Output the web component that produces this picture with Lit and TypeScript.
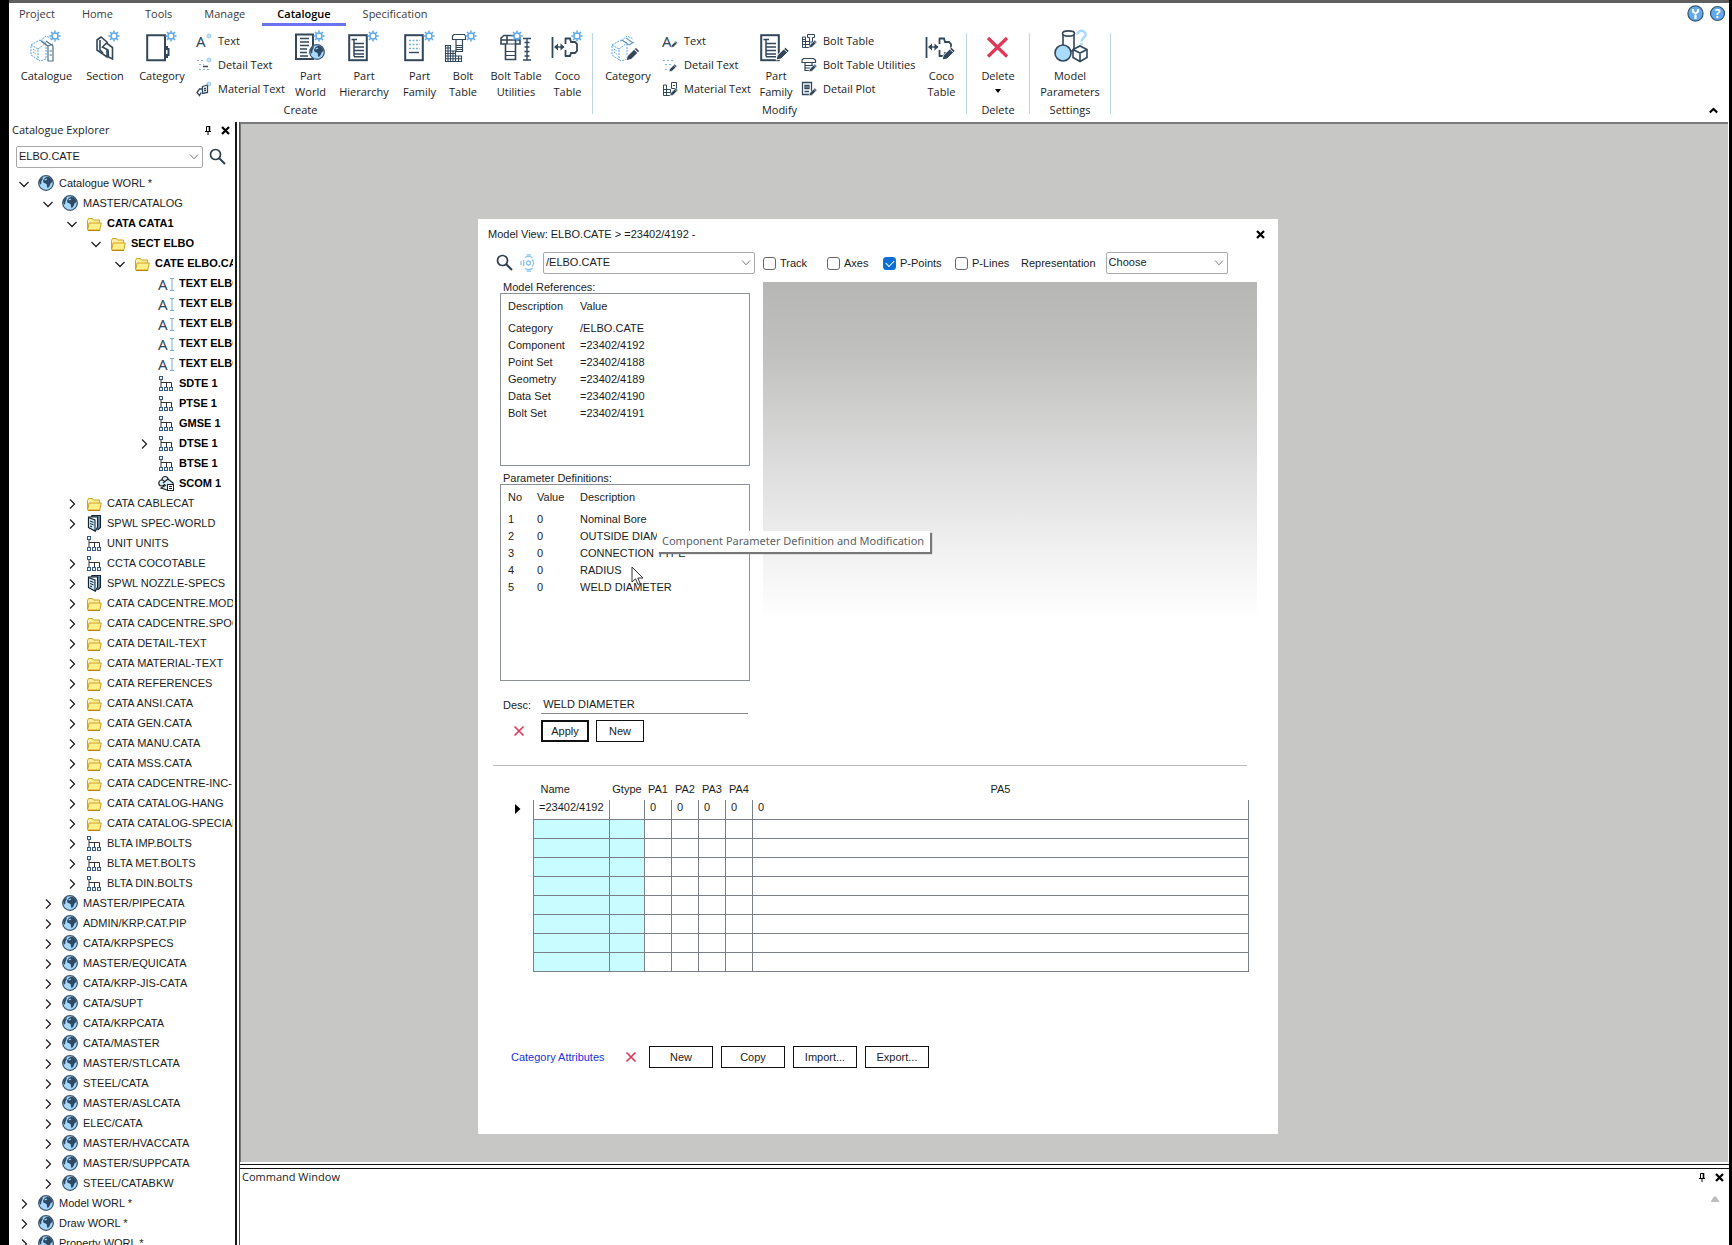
import { LitElement, html, css, svg, nothing } from "lit";
import { customElement, state } from "lit/decorators.js";

const ui = css`
  :host { font: 11px/16px "Open Sans", "Noto Sans", sans-serif; color: #1c1c1c; }
  * { box-sizing: border-box; }
  button { font: inherit; color: inherit; background: none; border: 0; padding: 0; margin: 0; cursor: default; }
  svg { display: block; flex: none; }
  .plain { font-family: "Liberation Sans", Arial, sans-serif; }
  .combo { display: grid; align-items: center; }
  .combo > * { grid-area: 1 / 1; }
  .combo select {
    appearance: none; width: 100%; height: 22px; margin: 0; padding: 0 20px 2px 2px;
    border: 1px solid #a9a9a9; border-radius: 2px; background: #fff; color: #1c1c1c;
    font: 11px/16px "Liberation Sans", Arial, sans-serif;
  }
  .combo svg { justify-self: end; margin-right: 4px; pointer-events: none; }
`;

const D = "#33475b";
const B = "#5aa7e4";

/* ---- shared drawing parts ---- */
const star = (x: number, y: number, s = 1) => svg`
  <g transform="translate(${x} ${y}) scale(${s})" fill="none" stroke=${B}>
    <circle r="3" stroke-width="1.4" fill="#fff"></circle>
    <path stroke-width="1.5" d="M0-5.6V-3.4M0 3.4V5.6M-5.6 0H-3.4M3.4 0H5.6M-4-4L-2.5-2.5M2.5 2.5L4 4M4-4L2.5-2.5M-2.5 2.5L-4 4"></path>
  </g>`;
const pencil = (x: number, y: number, s = 1) => svg`
  <g transform="translate(${x} ${y}) scale(${s})">
    <path d="M0 13L1.2 8.4L9.5 .2L13.2 3.9L5 12Z" fill=${D} stroke="#fff" stroke-width="1"></path>
    <path d="M8 2.2L11.4 5.6" stroke="#fff" stroke-width="1"></path>
  </g>`;
const globe = (x: number, y: number, r: number) => svg`
  <g transform="translate(${x} ${y}) scale(${r / 8})">
    <circle r="7.3" fill="#a5d8fb" stroke="#3d556e" stroke-width="1.3"></circle>
    <path fill="#2f4a66" d="M-2.4-3.6L-1-5.2L1.4-6.2L4-5.4L5.8-3.4L6.2-1L4.4.8L3.6 3L2.2 4.8L1 4.4L.8 1.6L-.4.4L-2.4-.2L-3-2Z"></path>
    <path fill="#2f4a66" d="M-6.8-1.4L-5.4-4.2L-3-6L-3.6-3.6L-4.6-1.4L-4.8 1L-6 1.6Z"></path>
    <path fill="#a5d8fb" d="M-1.6-3.4L.6-4.4L1.2-3.6L-.8-2.6Z"></path>
  </g>`;
const book = svg`
  <g fill="none" stroke=${B} stroke-width="1" stroke-dasharray="2 1">
    <path d="M3 16L12 11L18 14V30L12 32L3 26Z M3 16L10 20V31 M10 20L18 14 M5 20L8 22M5 23L8 25M12 12L18 7L24 10"></path>
  </g>`;
const connector = svg`
  <g fill="none" stroke=${D} stroke-width="1.8">
    <path d="M3.5 8V29M16 9.500H21L22 13H26L28 15V22L26 24H22L21 27H16M16.500 9V15M16.500 21V27.500"></path>
    <path d="M6 18H15" stroke-width="1.400"></path>
  </g>
  <path fill=${D} d="M5 18L9 14.500V21.500ZM15.500 18L11.500 14.500V21.500Z"></path>`;
const sheet = svg`<rect x="4.200" y="6.200" width="17.600" height="25" fill="#fff" stroke=${D} stroke-width="2"></rect>`;
const treeLines = svg`<path fill="none" stroke=${D} stroke-width="1.500" d="M6.500 10.500H12M9 10.500V27.500M9 14.500H19M9 18H19M9 21.500H19M9 25H19M9 27.800H19"></path>`;
const boltShape = svg`
  <path fill="#fff" stroke=${D} stroke-width="1.600" d="M4 9L7 6.500H20L23 9V15H18.500V30.500H8.500V15H4Z M4 11H23M10 7V15M18.500 7V15"></path>
  <path fill="none" stroke=${D} stroke-width="1.200" d="M8.500 15H18.500M8.500 22.500H18.500M8.500 26.500H18.500"></path>`;
const stairs = svg`
  <path fill="#fff" stroke=${D} stroke-width="1.100" d="M1.500 16.500H6.500V22H11.500V27H17.500V32.500H1.500Z M1.500 19H6.500M1.500 22H6.500M1.500 24.500H11.500M1.500 27H11.500M1.500 29.800H17.500M4 16.500V32.500M6.500 22V32.500M9 22V32.500M11.500 27V32.500M14.500 27V32.500"></path>
  <path fill="#fff" stroke=${D} stroke-width="1.200" d="M8.500 7L10 5.500H20.500L21.500 7V10.500H18.500V22.500H12V10.500H8.500Z M12 10.500H18.500M12 16.500H18.500M12 18.500H18.500M12 20.500H18.500"></path>`;

const big: Record<string, unknown> = {
  catalogue: svg`${book}<g fill="none" stroke="#52708a" stroke-width="1.200"><path d="M13 12L20 17V32H25V17L18 12M20 17L25 15M21.500 22H24M21.500 26H24"></path></g>${star(27, 7)}`,
  section: svg`<g fill="#fff" stroke=${D} stroke-width="1.600"><path d="M11 11L15 8L21 13V28L11 21Z"></path><path d="M14 11L14 21L17 24M16.500 18L20.500 14L26.500 18.500V30L22.500 28L22 21Z"></path></g>${star(28, 7)}`,
  category: svg`<path fill="none" stroke=${D} stroke-width="2" d="M4.200 6.200H22V18H24V20H25.500V26H24V28H22V31.200H4.200Z M22 18V28"></path>${star(28, 7)}`,
  world: svg`<rect x="4" y="5.500" width="17" height="24.500" fill="#fff" stroke=${D} stroke-width="2"></rect><path stroke=${D} stroke-width="1.700" d="M8 9.500H17M8 13H17M8 16.500H17M8 20H15M8 23.500H15M8 27H16"></path>${globe(25, 23, 8)}${star(27, 7)}`,
  hierarchy: svg`${sheet}${treeLines}${star(28, 7)}`,
  family: svg`${sheet}<path stroke="#7db4de" stroke-width="1.300" stroke-dasharray="2 1.500" d="M8 11.500H19M8 15.500H19M8 19.500H19"></path><path stroke=${D} stroke-width="1.400" d="M8 23.500H18"></path>${star(28, 7)}`,
  bolt: svg`${stairs}${star(27, 7)}`,
  boltutil: svg`${boltShape}<path fill="none" stroke=${D} stroke-width="1.400" d="M26 9.500H34M26 31H34M30 9.500V31M27.500 13.500H32.500M27.500 18H32.500M27.500 22.500H32.500M27.500 27H32.500"></path>${star(20, 7)}`,
  coco: svg`${connector}${star(28, 7)}`,
  categoryEdit: svg`${book}<g fill="none" stroke="#6d9bc0" stroke-width="1.200"><path d="M13 11L20 16M17 9L24 14M20 16L25 13"></path></g>${pencil(17, 18, 1.05)}`,
  familyEdit: svg`${sheet}${treeLines}${pencil(19, 18, 1)}`,
  cocoEdit: svg`${connector}${pencil(19, 18, 1)}`,
  remove: svg`<path stroke="#e23657" stroke-width="3.200" d="M9 9L28 27.500M28 9L9 27.500"></path>`,
  model: svg`<g stroke=${D} stroke-width="1.600" fill="#fff"><path d="M12 4.500V22H23V4.500"></path><ellipse cx="17.500" cy="4.500" rx="6" ry="2.600"></ellipse><path d="M22 20.500L29 17L36 20.500V28.500L29 32.500L22 28.500ZM22 20.500L29 24L36 20.500M29 24V32.500"></path><circle cx="12" cy="24" r="8" fill="#a9dcfc"></circle></g><path fill="none" stroke="#a9dcfc" stroke-width="2.600" d="M26.500 5.500C27 0 35 1 34.500 6C34 9 30.500 9 30.500 12.500M30.500 14V16"></path>`,
};

const small: Record<string, unknown> = {
  text: svg`<text x="0" y="14" font-family="Noto Sans" font-size="15" fill=${D}>A</text>${star(13, 3, 0.45)}`,
  detail: svg`<path fill="none" stroke="#7db4de" stroke-dasharray="2 2" d="M1 3.500H9M3 7.500H8M3 12.500H14"></path><path stroke=${D} stroke-width="1.500" d="M7 9.500H12"></path>${star(13, 3, 0.45)}`,
  material: svg`<path fill="#fff" stroke=${D} stroke-width="1.300" d="M6.500 5.500L11.500 4V11.500L6.500 12.500ZM6.500 8H3.500L1 11.500L3.500 14.500L5 11.500M8 7.500H10M8 9.500H10"></path>${star(13, 3, 0.45)}`,
  textEdit: svg`<text x="0" y="14" font-family="Noto Sans" font-size="15" fill=${D}>A</text>${pencil(9, 8, 0.5)}`,
  detailEdit: svg`<path fill="none" stroke="#7db4de" stroke-dasharray="2 2" d="M1 3.500H13M3 7.500H9M3 12.500H8"></path>${pencil(7, 7, 0.6)}`,
  materialEdit: svg`<path fill="none" stroke=${D} d="M1.500 4V14.500H8.500V8.500H4.500V4ZM1.500 8.500H8M1.500 11.500H8M4.500 8V14.500M9.500 1.500H14.500V7.500H9.500ZM11 4.500H13"></path>${pencil(8, 7, 0.6)}`,
  boltEdit: svg`<path fill="none" stroke=${D} d="M1.500 4V14.500H8.500V8.500H4.500V4ZM1.500 6.500H4M1.500 8.500H8M1.500 11.500H8M4.500 8V14.500M6.500 1.500H13.500V4.500H11.500V9H8.500V4.500H6.500Z"></path>${pencil(8, 7, 0.6)}`,
  boltutilEdit: svg`<path fill="none" stroke=${D} stroke-width="1.200" d="M1 3L2.500 1.500H12.500L14.500 3V5.500H1ZM4 5.500V13.500H9M4 8.500H12M4 11H9M11 5.500V8"></path>${pencil(8, 7, 0.6)}`,
  plot: svg`<path fill="none" stroke=${D} stroke-width="1.300" d="M1.500 1.500H10.500V13.500H1.500ZM4 4.500H8V7.500H4ZM6 4V8M3.500 10.500H8"></path>${pencil(8, 7, 0.6)}`,
};

const pin = html`<svg width="8" height="10" viewBox="0 0 8 10" fill="none" stroke="#000"><path d="M2.500 6V1.500H5.500V6M1 6.500H7M4 7V10"></path><path d="M5.500 1V6.500" stroke-width="1.600"></path></svg>`;
const cross = html`<svg width="9" height="9" viewBox="0 0 9 9"><path d="M1 1L8 8M8 1L1 8" stroke="#000" stroke-width="2.200"></path></svg>`;
const redCross = html`<svg width="12" height="12" viewBox="0 0 12 12"><path d="M1.500 1.500L10.500 10.500M10.500 1.500L1.500 10.500" stroke="#e0395a" stroke-width="1.700"></path></svg>`;
const lens = html`<svg width="18" height="18" viewBox="0 0 18 18" fill="none" stroke="#2f3e4c"><circle cx="6.500" cy="6.500" r="5" stroke-width="1.700"></circle><path d="M10 10L16 16" stroke-width="2"></path></svg>`;
const chevron = html`<svg width="10" height="6" viewBox="0 0 10 6" fill="none" stroke="#777"><path d="M1 .5L5 4.800L9 .5"></path></svg>`;

type Large = { kind: "large"; icon: string; label: string[]; menu?: boolean };
type Stack = { kind: "stack"; rows: [string, string][] };
type Group = { name: string; cls: string; items: (Large | Stack)[] };
const L = (icon: string, ...label: string[]): Large => ({ kind: "large", icon, label });
const groups: Group[] = [
  { name: "Create", cls: "create", items: [
    L("catalogue", "Catalogue"), L("section", "Section"), L("category", "Category"),
    { kind: "stack", rows: [["text", "Text"], ["detail", "Detail Text"], ["material", "Material Text"]] },
    L("world", "Part", "World"), L("hierarchy", "Part", "Hierarchy"), L("family", "Part", "Family"),
    L("bolt", "Bolt", "Table"), L("boltutil", "Bolt Table", "Utilities"), L("coco", "Coco", "Table") ] },
  { name: "Modify", cls: "modify", items: [
    L("categoryEdit", "Category"),
    { kind: "stack", rows: [["textEdit", "Text"], ["detailEdit", "Detail Text"], ["materialEdit", "Material Text"]] },
    L("familyEdit", "Part", "Family"),
    { kind: "stack", rows: [["boltEdit", "Bolt Table"], ["boltutilEdit", "Bolt Table Utilities"], ["plot", "Detail Plot"]] },
    L("cocoEdit", "Coco", "Table") ] },
  { name: "Delete", cls: "delete", items: [{ ...L("remove", "Delete"), menu: true }] },
  { name: "Settings", cls: "settings", items: [L("model", "Model", "Parameters")] },
];

@customElement("ribbon-bar")
class RibbonBar extends LitElement {
  @state() private active = "Catalogue";
  static styles = [ui, css`
    :host { display: block; background: #fff; }
    .top { display: flex; height: 24px; padding-right: 3px; }
    .tabs { display: flex; gap: 2px; flex: 1; }
    .tab { padding: 2px 15px 0; border-bottom: 3px solid transparent; height: 23px; color: #3a3a3a; }
    .tab:first-child { padding: 2px 10px 0; }
    .tab.on { border-color: #6a74f3; color: #000; font-weight: 600; }
    .help { display: flex; align-items: start; gap: 5px; padding-top: 2px; }
    .groups { display: flex; align-items: start; padding-left: 5px; }
    .group { padding: 2px 5px 0 4px; position: relative; }
    .group:first-child { padding-left: 0; padding-right: 6px; }
    .group::after { content: ""; position: absolute; right: 0; top: 6px; bottom: 8px; width: 1px; background: #bcd7e8; }
    .items { display: grid; height: 73px; }
    .create { grid-template-columns: 65px 52px 62px 97px 41px 66px 45px 42px 64px 39px; }
    .modify { grid-template-columns: 62px 95px 44px 123px 41px; }
    .delete { grid-template-columns: 54px; }
    .settings { grid-template-columns: 72px; }
    .large { display: flex; flex-direction: column; align-items: center; white-space: nowrap; text-align: center; }
    .large svg { margin-bottom: 5px; }
    .large .arrow { margin: 5px 0 0; }
    .stack { display: flex; flex-direction: column; padding-left: 3px; }
    .row { display: flex; align-items: center; gap: 6px; height: 24px; white-space: nowrap; }
    .name { text-align: center; height: 20px; }
    .fold { margin-left: auto; align-self: end; padding: 0 11px 8px; }
  `];
  private item(i: Large | Stack) {
    if (i.kind === "stack")
      return html`<div class="stack">${i.rows.map(([ic, t]) => html`<button class="row"><svg width="16" height="16" viewBox="0 0 16 16">${small[ic]}</svg>${t}</button>`)}</div>`;
    return html`<button class="large"><svg width="38" height="34" viewBox="0 0 38 34">${big[i.icon]}</svg>
      ${i.label.map((t) => html`<span>${t}</span>`)}
      ${i.menu ? html`<svg class="arrow" width="6" height="4" viewBox="0 0 6 4"><path d="M0 0H6L3 4Z"></path></svg>` : nothing}</button>`;
  }
  render() {
    return html`
      <div class="top">
        <nav class="tabs">${["Project", "Home", "Tools", "Manage", "Catalogue", "Specification"].map((t) => html`
          <button class="tab ${t === this.active ? "on" : ""}" @click=${() => (this.active = t)}>${t}</button>`)}</nav>
        <div class="help">
          <button aria-label="Tools"><svg width="17" height="17" viewBox="0 0 17 17"><circle cx="8.500" cy="8.500" r="7.600" fill="#62aaec" stroke="#34536f" stroke-width="1.200"></circle><path d="M6 4V6.500L8.500 8.500L11 6.500V4M8.500 8V14" fill="none" stroke="#fff" stroke-width="2.200"></path></svg></button>
          <button aria-label="Help"><svg width="17" height="17" viewBox="0 0 17 17"><circle cx="8.500" cy="8.500" r="7" fill="#62aaec" stroke="#34536f" stroke-width="1.200"></circle><text x="8.500" y="13" text-anchor="middle" font-family="Open Sans" font-size="12" font-weight="700" fill="#fff">?</text></svg></button>
        </div>
      </div>
      <div class="groups">
        ${groups.map((g) => html`<section class="group"><div class="items ${g.cls}">${g.items.map((i) => this.item(i))}</div><div class="name">${g.name}</div></section>`)}
        <button class="fold" aria-label="Collapse ribbon"><svg width="9" height="7" viewBox="0 0 9 7"><path d="M.8 5.500L4.500 2L8.200 5.500" fill="none" stroke="#000" stroke-width="2.200"></path></svg></button>
      </div>`;
  }
}

/* ---- explorer tree ---- */
type Node = [level: number, icon: string, label: string, state?: string];
const nodes: Node[] = [
  [0, "globe", "Catalogue WORL *", "open"], [1, "globe", "MASTER/CATALOG", "open"],
  [2, "folder", "CATA CATA1", "open"], [3, "folder", "SECT ELBO", "open"], [4, "folder", "CATE ELBO.CATE", "open"],
  ...[1, 2, 3, 4, 5].map((): Node => [5, "text", "TEXT ELBO.CATE"]),
  [5, "set", "SDTE 1"], [5, "set", "PTSE 1"], [5, "set", "GMSE 1"], [5, "set", "DTSE 1", "shut"], [5, "set", "BTSE 1"], [5, "scom", "SCOM 1"],
  [2, "folder", "CATA CABLECAT", "shut"], [2, "spec", "SPWL SPEC-WORLD", "shut"], [2, "set", "UNIT UNITS"],
  [2, "set", "CCTA COCOTABLE", "shut"], [2, "spec", "SPWL NOZZLE-SPECS", "shut"],
  ...["CADCENTRE.MODEL", "CADCENTRE.SPOOL", "DETAIL-TEXT", "MATERIAL-TEXT", "REFERENCES", "ANSI.CATA", "GEN.CATA", "MANU.CATA", "MSS.CATA", "CADCENTRE-INC-", "CATALOG-HANG", "CATALOG-SPECIAL"].map((n): Node => [2, "folder", "CATA " + n, "shut"]),
  ...["IMP", "MET", "DIN"].map((n): Node => [2, "set", `BLTA ${n}.BOLTS`, "shut"]),
  ...["MASTER/PIPECATA", "ADMIN/KRP.CAT.PIP", "CATA/KRPSPECS", "MASTER/EQUICATA", "CATA/KRP-JIS-CATA", "CATA/SUPT", "CATA/KRPCATA", "CATA/MASTER", "MASTER/STLCATA", "STEEL/CATA", "MASTER/ASLCATA", "ELEC/CATA", "MASTER/HVACCATA", "MASTER/SUPPCATA", "STEEL/CATABKW"].map((n): Node => [1, "globe", n, "shut"]),
  ...["Model", "Draw", "Property"].map((n): Node => [0, "globe", n + " WORL *", "shut"]),
];
const treeIcon: Record<string, unknown> = {
  globe: globe(8, 9, 8),
  folder: svg`<path d="M1.500 15.500V6.500L2.500 4.500H6.500L7.500 6H13.500V9" fill="#fdeea0" stroke="#d4a21c"></path><path d="M1.500 16L3.200 9H15.300L13.800 16Z" fill="#fff08c" stroke="#d4a21c"></path><path d="M2 16.500H14" stroke="#b98512"></path>`,
  text: svg`<text x="0" y="16" font-family="Noto Sans" font-size="15" fill=${D}>A</text><path d="M12 4.500H16M12 16.500H16M14 4.500V16.500" fill="none" stroke="#6db0e6"></path>`,
  set: svg`<g fill="#e8f3fb" stroke="#3a5a80"><path d="M3 4V14M3 8.500H13.500M8.500 8.500V13M13.500 8.500V13" fill="none" stroke="#333"></path><rect x="1.500" y="2.500" width="3" height="3"></rect><rect x="1.500" y="13.500" width="3" height="3"></rect><rect x="6.500" y="13.500" width="3" height="3"></rect><rect x="11.500" y="13.500" width="3" height="3"></rect></g>`,
  scom: svg`<g fill="#d7ebf5" stroke="#222" stroke-width="1.200"><circle cx="7" cy="5.500" r="3"></circle><circle cx="3.800" cy="9" r="3"></circle><path d="M5 9L10 5L15 9V16H9L3 14L8 11"></path></g><rect x="9.500" y="10.500" width="6" height="6" fill="#fff" stroke="#222"></rect><path d="M11 12.500H14M11 14.500H14" stroke="#222"></path>`,
  spec: svg`<path d="M5 3L6 1.500H14.500V13.500L11.500 16" fill="#5e87ab" stroke="#16242f" stroke-width="1.100"></path><path d="M2.500 3H11.500V13L9.500 17L2.500 13.500Z" fill="#fff" stroke="#16242f" stroke-width="1.100"></path><path d="M2.500 3.500L9 6V17L2.500 13.500Z" fill="#c9e8f8" stroke="#16242f" stroke-width="1.100"></path><path d="M4 7L7.500 8.400M4 9.500L7.500 10.900M4 12L6 12.800" stroke="#16242f"></path>`,
};

@customElement("catalogue-explorer")
class CatalogueExplorer extends LitElement {
  static styles = [ui, css`
    :host { display: flex; flex-direction: column; background: #fff; overflow: hidden; padding-left: 3px; border-right: 2px solid #16181c; }
    .title { display: flex; align-items: center; height: 16px; padding-right: 5px; gap: 9px; }
    .title span { flex: 1; }
    .search { display: flex; align-items: center; gap: 6px; padding: 8px 8px 5px 4px; }
    .combo { flex: 1; }
    .tree { flex: 1; overflow: hidden; margin: 0 2px 0 0; padding: 0; list-style: none; }
    .node { display: flex; align-items: center; height: 20px; white-space: nowrap; line-height: 20px; }
    .twisty { flex: none; width: 24px; height: 20px; display: grid; place-items: center; }
    .node .icon { margin: 0 5px 0 2px; }
    .bold { font-weight: 700; color: #000; }
  `];
  render() {
    return html`
      <div class="title"><span>Catalogue Explorer</span><button aria-label="Pin">${pin}</button><button aria-label="Close">${cross}</button></div>
      <div class="search"><div class="combo"><select aria-label="Element"><option>ELBO.CATE</option></select>${chevron}</div><button aria-label="Search">${lens}</button></div>
      <ul class="tree plain" role="tree">
        ${nodes.map(([lvl, ic, label, st], i) => html`<li class="node" role="treeitem" style="padding-left:${lvl * 24}px">
          ${st ? html`<button class="twisty" aria-label="Toggle ${label}"><svg width="12" height="14" viewBox="0 0 12 14" fill="none" stroke="#222" stroke-width="1.300"><path d=${st === "open" ? "M1.500 6L6 10.500L10.500 6" : "M4 3.500L8.500 8L4 12.500"}></path></svg></button>` : html`<span class="twisty"></span>`}
          <svg class="icon" width="16" height="18" viewBox="0 0 16 18">${treeIcon[ic]}</svg>
          <span class="label ${i > 1 && i < 16 ? "bold" : ""}">${label}</span></li>`)}
      </ul>`;
  }
}

/* ---- model view window ---- */
const refs = [["Category", "/ELBO.CATE"], ["Component", "=23402/4192"], ["Point Set", "=23402/4188"], ["Geometry", "=23402/4189"], ["Data Set", "=23402/4190"], ["Bolt Set", "=23402/4191"]];
const params = ["Nominal Bore", "OUTSIDE DIAMETER", "CONNECTION TYPE", "RADIUS", "WELD DIAMETER"];

@customElement("model-view")
class ModelView extends LitElement {
  static styles = [ui, css`
    :host { display: block; background: #fff; font-family: "Liberation Sans", Arial, sans-serif; padding-bottom: 66px; }
    .title { display: flex; align-items: center; justify-content: space-between; padding: 7px 13px 0 10px; }
    .tools { display: flex; align-items: center; height: 22px; margin-top: 10px; padding-left: 18px; }
    .beam { margin: 0 7px 0 6px; }
    .path { width: 212px; }
    .check { display: flex; align-items: center; gap: 4px; margin-left: 8px; width: 56px; }
    .check.narrow { width: 48px; }
    .check.wide { width: 64px; }
    .check input { appearance: none; width: 13px; height: 13px; margin: 0; border: 1px solid #666; border-radius: 3px; background: #fff; display: grid; place-items: center; }
    .check input:checked { background: #0b6fd6; border-color: #0b6fd6; }
    .check input:checked::after { content: ""; width: 7px; height: 4px; border: solid #fff; border-width: 0 0 1px 1px; transform: rotate(-45deg); margin-bottom: 2px; }
    .rep { display: flex; align-items: center; gap: 10px; margin-left: 2px; }
    .rep .combo { width: 122px; }
    .body { display: grid; grid-template-columns: 250px 1fr; gap: 13px; padding: 5px 21px 0 22px; align-items: start; position: relative; }
    h2 { font: inherit; margin: 0; padding-left: 3px; height: 14px; line-height: 17px; }
    .box { border: 1px solid #8d929a; height: 173px; padding: 2px 7px; margin-bottom: 4px; }
    .box.tall { height: 197px; }
    table { border-collapse: collapse; }
    th { font-weight: 400; text-align: left; }
    .box th, .box td { padding: 0; height: 17px; line-height: 17px; white-space: nowrap; }
    .box th { height: 24px; padding-bottom: 3px; }
    .c72 { width: 72px; } .c29 { width: 29px; } .c43 { width: 43px; }
    .view { height: 345px; margin-top: 3px; background: linear-gradient(#b6b7b5, #c0c0be 20%, #dadada 50%, #f0f1f0 78%, #fff 98%); }
    .desc { display: flex; align-items: center; gap: 10px; padding: 10px 2px 0 3px; }
    .desc input { flex: 1; min-width: 0; height: 19px; border: 0; border-bottom: 1px solid #888; padding: 0 2px; font: inherit; color: inherit; outline: 0; background: #fff; }
    .acts { display: flex; align-items: center; padding: 6px 0 0 13px; }
    .btn { border: 1px solid #111; background: #fff; height: 22px; width: 64px; }
    .btn.short { width: 48px; margin-right: 7px; }
    .btn.main { border-width: 2px; margin-left: 16px; }
    hr { border: 0; border-top: 1px solid #b9b9b9; margin: 23px 31px 0 15px; }
    .grid { display: flex; padding: 15px 29px 0 37px; }
    .mark { width: 18px; padding-top: 23px; }
    .grid table { flex: 1; table-layout: fixed; }
    .grid th { height: 19px; padding: 0 0 3px; white-space: nowrap; text-align: center; }
    .grid th:first-child { text-align: left; padding-left: 7px; }
    .grid td { height: 19px; padding: 0 0 4px 5px; line-height: 14px; border: 1px solid #7b7f88; white-space: nowrap; overflow: hidden; }
    .grid tr.first td { border-top: 0; }
    .grid tr.blank td:nth-child(-n + 2) { background: #c8fcff; }
    .k1 { width: 76px; } .k2 { width: 35px; } .k3 { width: 27px; }
    .foot { display: flex; align-items: center; gap: 8px; padding: 74px 0 0 33px; }
    .foot a { color: #1a34d8; text-decoration: none; width: 106px; }
    .foot .del { width: 16px; }
    .tip { position: absolute; left: 179px; top: 257px; height: 21px; padding: 2px 6px 0 5px; white-space: nowrap; background: #fff; color: #5a5f66; box-shadow: 2px 2px 1px #777; font: 11px/16px "Noto Sans", "Open Sans", sans-serif; }
    .cursor { position: absolute; left: 153px; top: 292px; }
  `];
  private check(label: string, cls = "", on = false) {
    return html`<label class="check ${cls}"><input type="checkbox" .checked=${on}>${label}</label>`;
  }
  render() {
    const blank = Array.from({ length: 8 });
    return html`
      <div class="title"><span>Model View: ELBO.CATE &gt; =23402/4192 -</span><button aria-label="Close">${cross}</button></div>
      <div class="tools">
        <button aria-label="Search">${lens}</button>
        <button class="beam" aria-label="Signal"><svg width="16" height="18" viewBox="0 0 16 18" fill="none" stroke="#8cc4ea" stroke-width="1.300"><circle cx="8.500" cy="9" r="2"></circle><path d="M3.700 6V12M1 7V11M5 3.500C7.500 2 10.500 2 12.500 4M5 14.500C7.500 16 10.500 16 12.500 14M12 5.500C14 7.500 14 10.500 12 12.500M6.500 .8H11M6.500 17.200H11"></path></svg></button>
        <div class="combo path"><select aria-label="Element path"><option>/ELBO.CATE</option></select>${chevron}</div>
        ${this.check("Track")}${this.check("Axes", "narrow")}${this.check("P-Points", "wide", true)}${this.check("P-Lines", "wide")}
        <label class="rep">Representation <span class="combo"><select><option>Choose</option></select>${chevron}</span></label>
      </div>
      <div class="body">
        <div>
          <h2>Model References:</h2>
          <div class="box"><table>
            <thead><tr><th class="c72">Description</th><th>Value</th></tr></thead>
            <tbody>${refs.map(([a, b]) => html`<tr><td>${a}</td><td>${b}</td></tr>`)}</tbody>
          </table></div>
          <h2>Parameter Definitions:</h2>
          <div class="box tall"><table>
            <thead><tr><th class="c29">No</th><th class="c43">Value</th><th>Description</th></tr></thead>
            <tbody>${params.map((p, i) => html`<tr><td>${i + 1}</td><td>0</td><td>${p}</td></tr>`)}</tbody>
          </table></div>
          <label class="desc">Desc: <input type="text" .value=${"WELD DIAMETER"}></label>
          <div class="acts"><button aria-label="Delete parameter">${redCross}</button><button class="btn short main">Apply</button><button class="btn short">New</button></div>
        </div>
        <div class="view"></div>
        <div class="tip" role="tooltip">Component Parameter Definition and Modification</div>
        <svg class="cursor" width="14" height="20" viewBox="0 0 14 20"><path d="M1 1V16L4.500 12.800L7 18.500L9.200 17.500L6.800 12H12Z" fill="#fff" stroke="#333"></path></svg>
      </div>
      <hr>
      <div class="grid">
        <div class="mark"><svg width="6" height="10" viewBox="0 0 6 10"><path d="M0 0L5.500 5L0 10Z"></path></svg></div>
        <table>
          <colgroup><col class="k1"><col class="k2"><col class="k3"><col class="k3"><col class="k3"><col class="k3"><col></colgroup>
          <thead><tr>${["Name", "Gtype", "PA1", "PA2", "PA3", "PA4", "PA5"].map((h) => html`<th>${h}</th>`)}</tr></thead>
          <tbody>
            <tr class="first">${["=23402/4192", "", "0", "0", "0", "0", "0"].map((v) => html`<td>${v}</td>`)}</tr>
            ${blank.map(() => html`<tr class="blank"><td></td><td></td><td></td><td></td><td></td><td></td><td></td></tr>`)}
          </tbody>
        </table>
      </div>
      <div class="foot"><a href="#attributes">Category Attributes</a><button class="del" aria-label="Delete component">${redCross}</button>
        ${["New", "Copy", "Import...", "Export..."].map((t) => html`<button class="btn">${t}</button>`)}</div>`;
  }
}

@customElement("app-root")
class AppRoot extends LitElement {
  static styles = [ui, css`
    :host { display: flex; flex-direction: column; height: 100vh; overflow: hidden; background: #fff; border: solid #000; border-width: 0 3px 0 9px; box-sizing: border-box; }
    .edge { height: 3px; flex: none; background: #5f5f5f; }
    .main { flex: 1; min-height: 0; display: grid; grid-template-columns: 228px 1fr; column-gap: 2px; }
    .right { display: flex; flex-direction: column; min-width: 0; border-left: 1px solid #4c4f55; }
    .desk { flex: 1; position: relative; background: #c7c7c5; border: solid #77797a; border-width: 2px 0 0 1px; margin-right: 1px; }
    .window { position: absolute; left: 237px; top: 95px; width: 800px; }
    .split { height: 7px; border-bottom: 1px solid #111; display: flex; flex-direction: column; padding-top: 2px; }
    .split::before { content: ""; height: 1px; background: #111; }
    .command { height: 76px; }
    .head { display: flex; align-items: center; gap: 9px; height: 16px; padding: 0 5px 0 2px; }
    .head span { flex: 1; }
    .more { display: block; margin: 11px 10px 0 auto; }
  `];
  render() {
    return html`
      <div class="edge"></div>
      <ribbon-bar></ribbon-bar>
      <div class="main">
        <catalogue-explorer></catalogue-explorer>
        <div class="right">
          <div class="desk"><model-view class="window"></model-view></div>
          <div class="split"></div>
          <div class="command">
            <div class="head"><span>Command Window</span><button aria-label="Pin">${pin}</button><button aria-label="Close">${cross}</button></div>
            <button class="more" aria-label="Scroll up"><svg width="8" height="6" viewBox="0 0 8 6"><path d="M0 6H8V5L5 .5H3L0 5Z" fill="#bdbdbd"></path></svg></button>
          </div>
        </div>
      </div>`;
  }
}
